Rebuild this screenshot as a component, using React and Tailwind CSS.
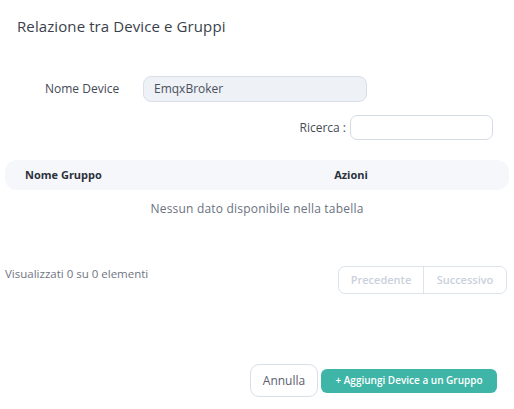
export default function App() {
  return (
    <div className="w-[514px] h-[409px] bg-white text-[#3d4350] flex flex-col" style={{ fontFamily: '"Open Sans", "Liberation Sans", sans-serif' }}>
      <div className="pl-[17px] pt-[15px] h-[60px]">
        <h2 className="text-[15px] leading-[22px] text-[#3a3f4a] tracking-[0.1px]">Relazione tra Device e Gruppi</h2>
      </div>

      <div className="flex items-center h-[26px] mt-[16px]">
        <label className="w-[143px] pl-[45px] text-[12px] text-[#444a56]">Nome Device</label>
        <div className="w-[224px] h-[26px] rounded-[8px] bg-[#eef1f6] border border-[#d9dfe8] pl-[10px] flex items-center text-[12px] text-[#4a505c]">
          EmqxBroker
        </div>
      </div>

      <div className="flex items-center justify-end h-[25px] mt-[13px] pr-[21px]">
        <span className="text-[12px] text-[#444a56] mr-[4px]">Ricerca :</span>
        <div className="w-[143px] h-[25px] rounded-[7px] border border-[#d5dce6] bg-white" />
      </div>

      <div className="mx-[5px] mt-[20px] h-[30px] rounded-[12px] bg-[#f5f7fa] flex items-center text-[11px] font-bold text-[#2c313b]">
        <div className="w-[247px] pl-[20px]">Nome Gruppo</div>
        <div className="w-[100px] text-center ml-[49px]">Azioni</div>
      </div>
      <div className="h-[38px] flex items-center justify-center text-[12px] text-[#6b7280] tracking-[0.2px]">
        Nessun dato disponibile nella tabella
      </div>

      <div className="flex items-start justify-between mt-[38px] pl-[5px] pr-[7px]">
        <span className="text-[11.5px] leading-[16px] pt-[0px] text-[#6f7582]">Visualizzati 0 su 0 elementi</span>
        <div className="flex h-[28px] rounded-[7px] border border-[#dde3ec] text-[11px] font-semibold text-[#c9d1dd]">
          <div className="w-[85px] flex items-center justify-center border-r border-[#dde3ec]">Precedente</div>
          <div className="w-[82px] flex items-center justify-center">Successivo</div>
        </div>
      </div>

      <div className="flex items-center justify-end gap-[3px] pr-[17px] mt-[70px]">
        <button className="w-[68px] h-[33px] rounded-[9px] border border-[#d8dfe9] bg-white text-[12px] text-[#5a606c]">Annulla</button>
        <button className="w-[176px] h-[24px] rounded-[6px] bg-[#3fb5a7] text-[10px] font-semibold text-white">+ Aggiungi Device a un Gruppo</button>
      </div>
    </div>
  );
}
